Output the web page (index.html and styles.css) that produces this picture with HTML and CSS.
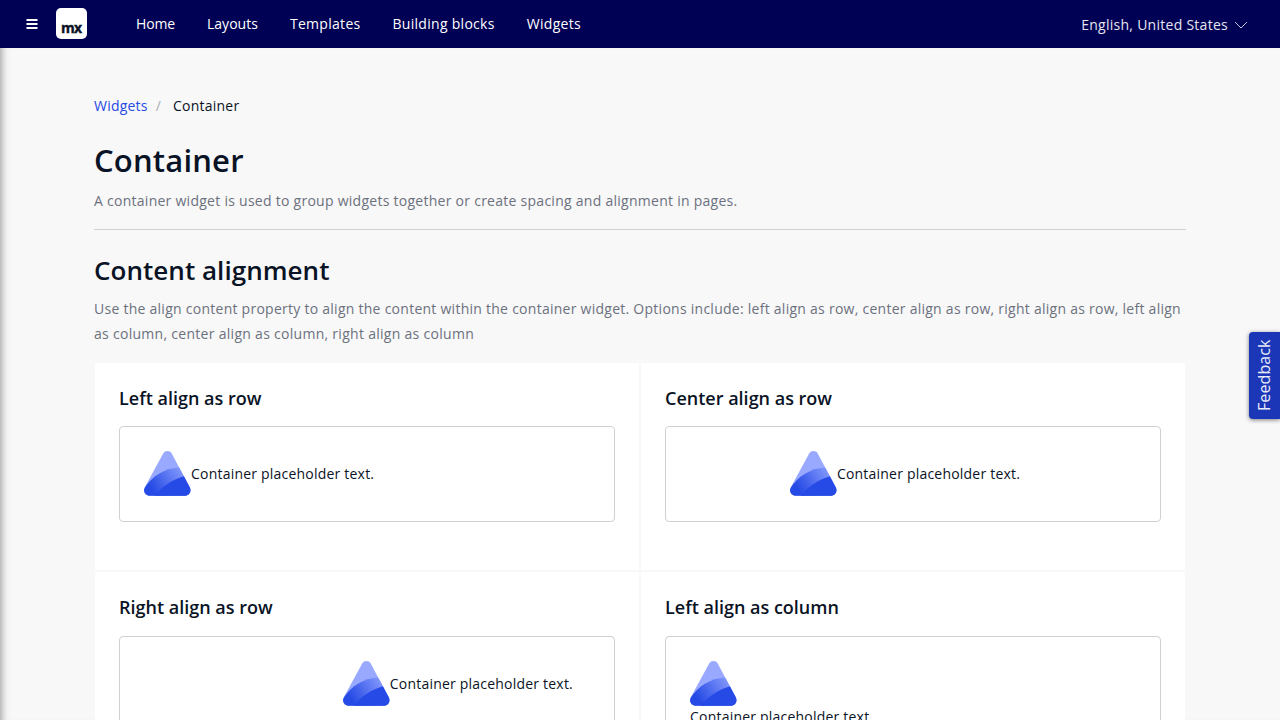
FILE: index.html
```html
<!DOCTYPE html>
<html lang="en">
<head>
<meta charset="utf-8">
<title>Container</title>
<link rel="stylesheet" href="styles.css">
</head>
<body>
<svg class="defs" width="0" height="0" aria-hidden="true">
  <defs>
    <linearGradient id="band" gradientUnits="userSpaceOnUse" x1="8" y1="38" x2="36" y2="20">
      <stop offset="0" stop-color="#264ae5"/><stop offset="1" stop-color="#7d93fa"/>
    </linearGradient>
    <clipPath id="tri"><path d="M19.200 2.500C21-.7 25.800-.8 27.700 2.500L45.600 36C47.800 40.200 45.300 44.700 40.600 44.700H5.900C1.200 44.700-1.300 40.200 .9 36Z"/></clipPath>
    <symbol id="logo" viewBox="0 0 47 46">
      <g clip-path="url(#tri)">
        <path d="M0 0H47V45H0Z" fill="#99a9ff"/>
        <path d="M-1 39C8 25 20 17.500 35 16.500H47V45H-1Z" fill="url(#band)"/>
        <path d="M10.500 45C18 35.500 28 29 40 25.300H47V45Z" fill="#264ae5"/>
      </g>
    </symbol>
  </defs>
</svg>
<header class="topbar">
  <svg class="menu" width="12" height="12" viewBox="0 0 12 12"><path d="M.5 2H11.500M.5 6H11.500M.5 10H11.500" stroke="#fff" stroke-width="2"/></svg>
  <div class="brand"><span class="brand-text">mx</span></div>
  <nav class="nav"><a class="tight">Home</a><a class="plain">Layouts</a><a>Templates</a><a>Building blocks</a><a>Widgets</a></nav>
  <div class="language"><span>English, United States</span>
    <svg width="14" height="8" viewBox="0 0 14 8"><path d="M1 1L7 7L13 1" fill="none" stroke="#c4c4dc" stroke-width="1"/></svg>
  </div>
</header>
<div class="viewport">
  <main class="page">
    <div class="breadcrumb"><a>Widgets</a><span class="slash">/</span><span>Container</span></div>
    <h1>Container</h1>
    <p class="lead">A container widget is used to group widgets together or create spacing and alignment in pages.</p>
    <h2>Content alignment</h2>
    <p class="description">Use the align content property to align the content within the container widget. Options include: left align as row, center align as row, right align as row, left align as column, center align as column, right align as column</p>
    <div class="grid">
      <section class="card"><h3>Left align as row</h3>
        <div class="box"><svg class="logo"><use href="#logo"/></svg><span class="label">Container placeholder text.</span></div></section>
      <section class="card"><h3>Center align as row</h3>
        <div class="box center"><svg class="logo"><use href="#logo"/></svg><span class="label">Container placeholder text.</span></div></section>
      <section class="card"><h3>Right align as row</h3>
        <div class="box right"><svg class="logo"><use href="#logo"/></svg><span class="label">Container placeholder text.</span></div></section>
      <section class="card"><h3>Left align as column</h3>
        <div class="box column"><svg class="logo"><use href="#logo"/></svg><span class="label">Container placeholder text.</span></div></section>
    </div>
  </main>
</div>
<button class="feedback">Feedback</button>
</body>
</html>
```
FILE: styles.css
```css
* { box-sizing: border-box; }
html, body { height: 100%; overflow: hidden; }
body {
  margin: 0;
  display: flex;
  flex-direction: column;
  background: #f8f8f8;
  color: #0a1325;
  font: 14px/20px "Open Sans", sans-serif;
}
.defs { position: absolute; }
.topbar {
  flex: none;
  height: 48px;
  display: flex;
  align-items: center;
  padding: 0 32px 0 26px;
  background: #000055;
  color: #fff;
}
.brand {
  width: 31px;
  height: 31px;
  margin: 0 0 1px 18px;
  padding: 10px 0 0 5px;
  border-radius: 5px;
  background: #fff;
  color: #0a1325;
}
.brand-text { font-size: 14px; font-weight: 700; letter-spacing: -.8px; -webkit-text-stroke: .4px #0a1325; }
.nav { display: flex; gap: 32px; margin-left: 49px; letter-spacing: .29px; }
.tight { letter-spacing: -.15px; }
.plain { letter-spacing: .03px; }
.language { display: flex; align-items: center; gap: 6px; margin: 2px 0 0 auto; color: #e6e6f0; letter-spacing: .27px; }
.viewport {
  flex: 1;
  min-height: 0;
  overflow: hidden;
  padding: 48px 94px 0;
  box-shadow: inset 9px 0 9px -8px rgba(0, 0, 0, .42);
}
.breadcrumb { display: flex; letter-spacing: .22px; }
.breadcrumb a { color: #264ae5; }
.slash { margin: 0 12px 0 8px; color: #a9acb3; }
h1, h2, h3, p { margin: 0; }
h1, h2, h3 { font-weight: 600; }
h1 { margin-top: 23px; font-size: 31px; line-height: 42px; letter-spacing: .18px; }
p { color: #6c717e; line-height: 25px; letter-spacing: .266px; }
.lead { margin-top: 7px; padding-bottom: 16px; border-bottom: 1px solid #ced0d3; }
h2 { margin-top: 22px; font-size: 26px; line-height: 36px; letter-spacing: .04px; }
.description { margin-top: 8px; letter-spacing: .287px; }
.description::first-line { letter-spacing: .26px; }
.grid {
  display: grid;
  grid-template-columns: 1fr 1fr;
  grid-auto-rows: 207.400px;
  gap: 2px;
  margin: 17px 1px 0;
}
.card { padding: 24px; background: #fff; }
h3 { margin-bottom: 16px; font-size: 18px; line-height: 23.200px; }
.box {
  display: flex;
  align-items: center;
  min-height: 96px;
  padding: 24px;
  border: 1px solid #ced0d3;
  border-radius: 4px;
}
.center { justify-content: center; }
.right { justify-content: flex-end; }
.right .label { margin-right: 17px; }
.column { flex-direction: column; align-items: flex-start; }
.logo { width: 47px; height: 46px; flex: none; }
.label { margin-right: 16px; letter-spacing: .21px; }
.feedback {
  position: absolute;
  top: 332px;
  right: 0;
  width: 31px;
  height: 87px;
  padding: 0;
  border: 0;
  border-radius: 0 4px 4px 0;
  background: #1b37b8;
  color: #e8ebf8;
  box-shadow: 0 -1px 4px rgba(0, 0, 0, .5);
  font: 16px/31px "Open Sans", sans-serif;
  letter-spacing: .1px;
  writing-mode: vertical-rl;
  transform: rotate(180deg);
}
```
